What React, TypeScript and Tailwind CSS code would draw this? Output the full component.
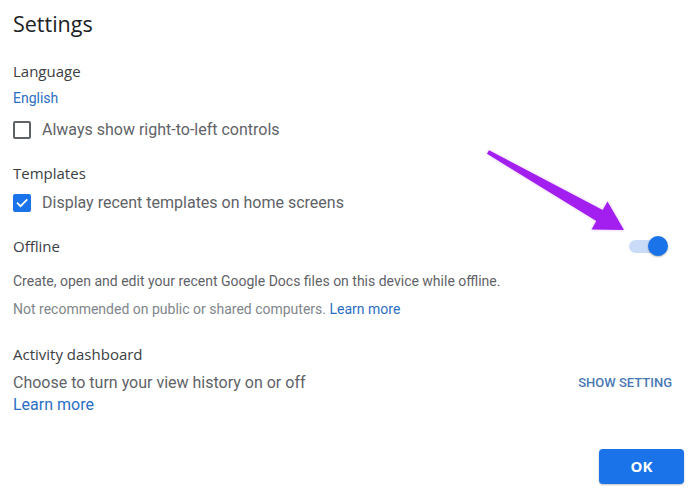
import React from "react";

const heading = { fontFamily: '"Open Sans", Roboto, sans-serif' };

function CheckBox({ checked }: { checked: boolean }) {
  if (checked) {
    return (
      <span className="flex h-[18px] w-[18px] items-center justify-center rounded-[2px] bg-[#1a73e8]">
        <svg width="14" height="14" viewBox="0 0 24 24" fill="none">
          <path d="M4.5 12.5l5 5L20 7" stroke="#fff" strokeWidth="3" strokeLinecap="square" />
        </svg>
      </span>
    );
  }
  return <span className="block h-[18px] w-[18px] rounded-[2px] border-2 border-[#5f6368]" />;
}

const ARROW = "489,150.3 602.7,209.9 607.5,201.5 624,230 591.5,229.5 596.3,221.1 487,153.7";

export default function App() {
  return (
    <div
      className="relative h-[498px] w-[697px] overflow-hidden bg-white px-[13px] pt-[10px] text-[#5f6368]"
      style={{ fontFamily: 'Roboto, "Liberation Sans", sans-serif' }}
    >
      <h1 className="text-[21.5px] leading-[28px] text-[#202124]" style={heading}>
        Settings
      </h1>

      <div className="mt-[23px] text-[15px] leading-[20px] text-[#3c4043]" style={heading}>
        Language
      </div>
      <div className="mt-[7px] text-[14px] leading-[20px] text-[#2b6fc4]">English</div>
      <label className="mt-[10px] flex h-[24px] items-center">
        <CheckBox checked={false} />
        <span className="ml-[11px] text-[16px]">Always show right-to-left controls</span>
      </label>

      <div className="mt-[21px] text-[15px] leading-[20px] text-[#3c4043]" style={heading}>
        Templates
      </div>
      <label className="mt-[8px] flex h-[24px] items-center">
        <CheckBox checked={true} />
        <span className="ml-[11px] text-[16px]">Display recent templates on home screens</span>
      </label>

      <div className="mt-[19px] flex h-[24px] items-center justify-between">
        <span className="text-[15px] text-[#3c4043]" style={heading}>
          Offline
        </span>
        <span className="relative mr-[17px] flex h-[22px] w-[38px] items-center">
          <span className="block h-[13px] w-[36px] rounded-full bg-[#c9dbf6]" />
          <span className="absolute right-[-1px] top-[1px] h-[20px] w-[20px] rounded-full bg-[#1a73e8] shadow-[0_1px_2px_rgba(0,0,0,0.3)]" />
        </span>
      </div>
      <p className="mt-[13px] text-[14px] leading-[20px]">
        Create, open and edit your recent Google Docs files on this device while offline.
      </p>
      <p className="mt-[8px] text-[14px] leading-[20px] text-[#80868b]">
        Not recommended on public or shared computers.{" "}
        <span className="text-[#2b6fc4]">Learn more</span>
      </p>

      <div className="mt-[25px] text-[15px] leading-[20px] text-[#3c4043]" style={heading}>
        Activity dashboard
      </div>
      <div className="mt-[8px] flex h-[22px] items-center justify-between">
        <span className="text-[16px]">Choose to turn your view history on or off</span>
        <span className="mr-[12px] text-[13px] font-medium text-[#4a78b5]">SHOW SETTING</span>
      </div>
      <div className="mt-[1px] text-[16px] leading-[20px] text-[#2b6fc4]">Learn more</div>

      <div className="mt-[34px] flex justify-end">
        <button
          className="h-[35px] w-[85px] rounded-[4px] bg-[#1a73e8] text-[15px] font-bold text-white shadow-[0_1px_2px_rgba(0,0,0,0.25)]"
          style={heading}
        >
          OK
        </button>
      </div>

      {/* annotation arrow pointing at the offline switch */}
      <svg className="pointer-events-none absolute left-0 top-0" width="697" height="498">
        <defs>
          <filter id="glow" x="-20%" y="-20%" width="140%" height="140%">
            <feGaussianBlur stdDeviation="1.5" />
          </filter>
        </defs>
        <polygon points={ARROW} fill="#c77cf5" opacity="0.5" filter="url(#glow)" />
        <polygon points={ARROW} fill="#a21ff0" strokeLinejoin="round" />
      </svg>
    </div>
  );
}
